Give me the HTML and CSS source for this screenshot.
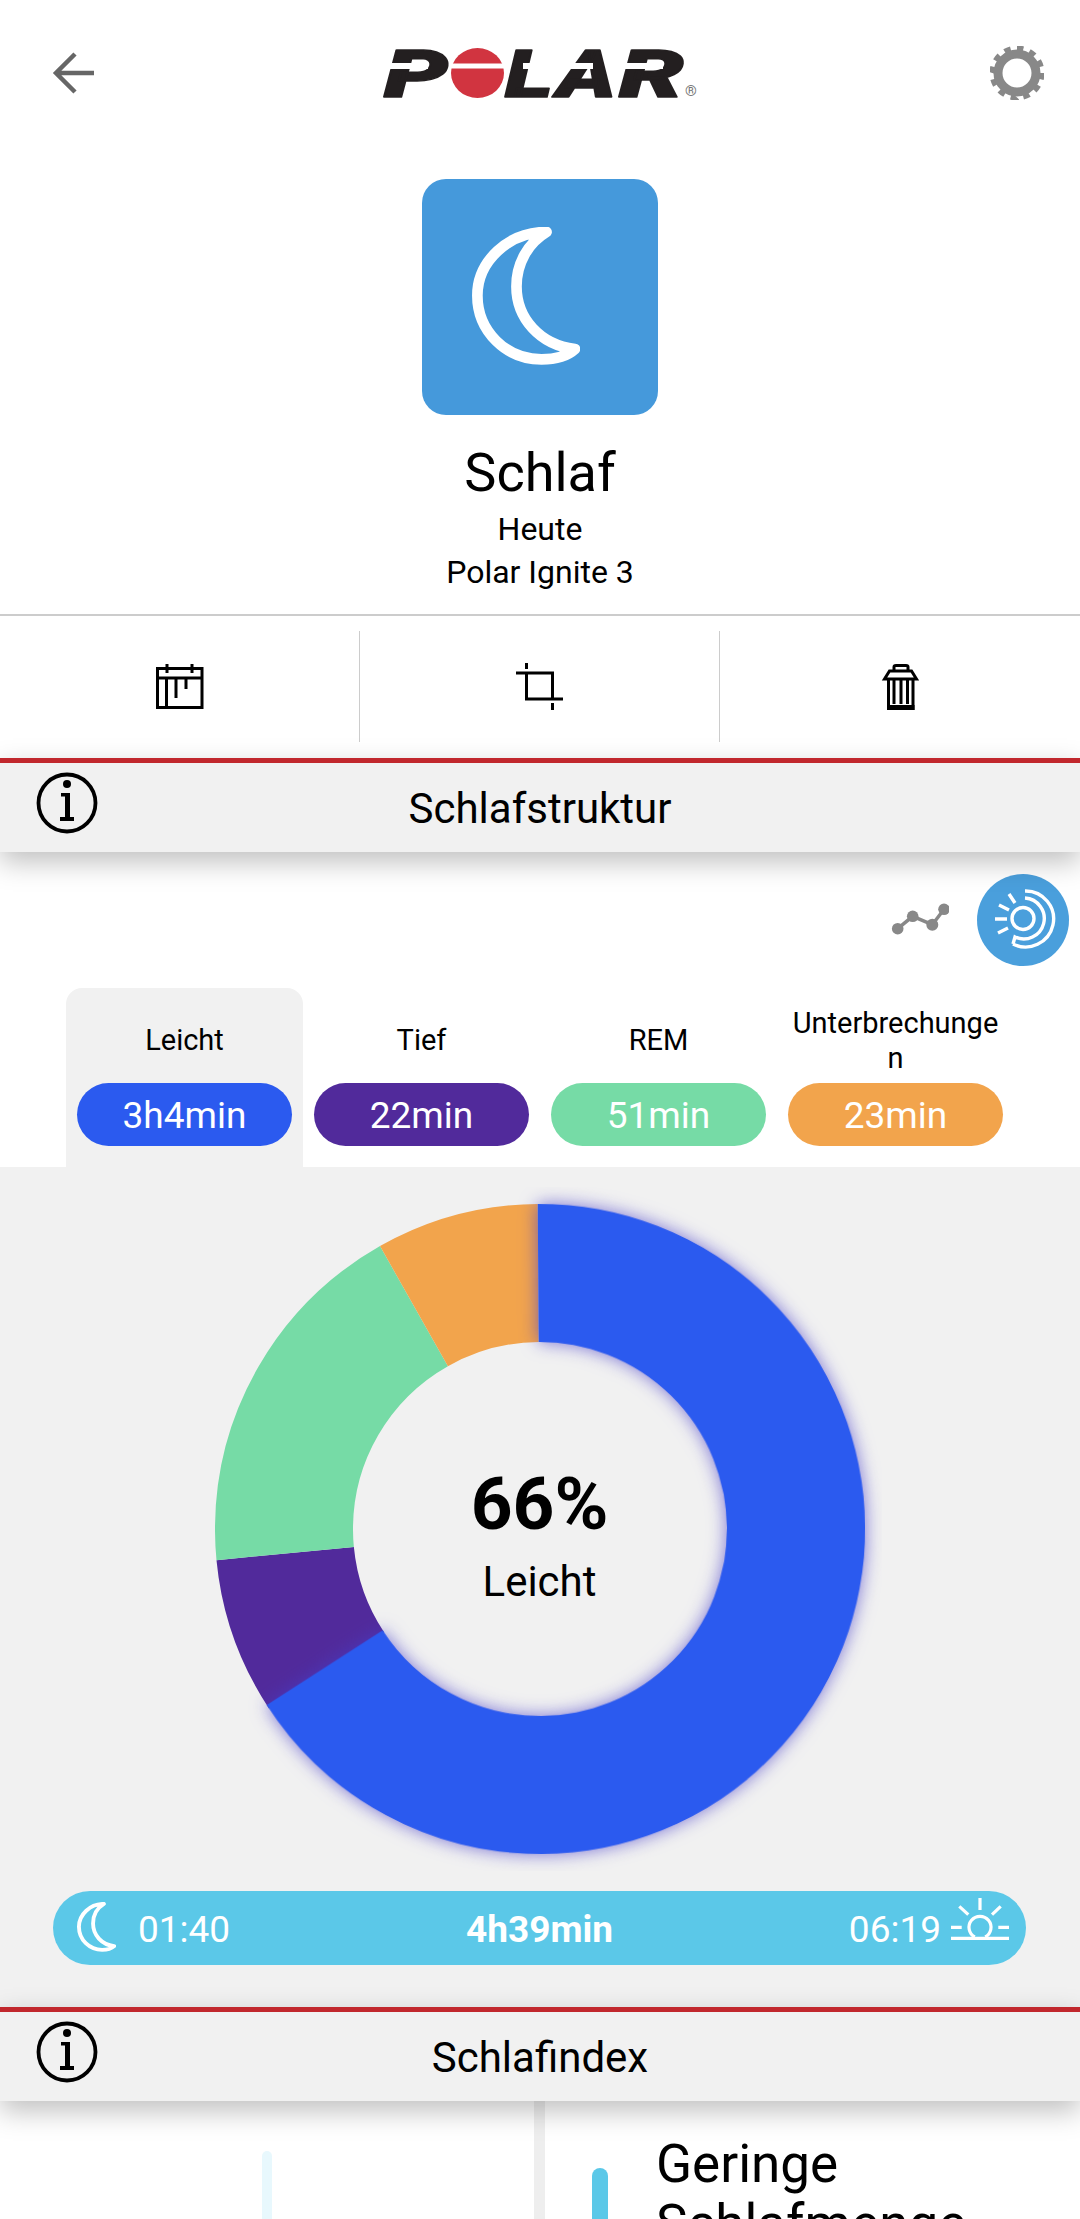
FILE: index.html
```html
<!DOCTYPE html>
<html lang="de">
<head>
    <meta charset="UTF-8">
    <title>Schlaf</title>
    <link rel="stylesheet" href="styles.css">
</head>
<body>
    <svg class="defs" width="0" height="0">
        <symbol id="moon" viewBox="157 157 323 413">
            <path class="moon-line" d="M380 172C265 172 173 260 173 362C173 470 260 553 365 553C405 553 440 545 465 522C360 510 290 430 290 335C290 265 325 205 380 172Z"/>
        </symbol>
        <symbol id="info" viewBox="0 0 62 62">
            <circle class="info-ring" cx="31" cy="31" r="28.5"/>
            <circle cx="31" cy="12" r="4"/>
            <path d="M25 21H34V45H38V49H24V45H29V24.500H25Z"/>
        </symbol>
    </svg>

    <header class="topbar">
        <svg class="back" width="44" height="44" viewBox="52 51 44 44">
            <path d="M94 73H57M75 54L56 73L75 92"/>
        </svg>
        <svg class="logo" width="316" height="58" viewBox="383 44 316 58">
            <text x="383" y="97" textLength="64" lengthAdjust="spacingAndGlyphs">P</text>
            <text x="504" y="97" textLength="48" lengthAdjust="spacingAndGlyphs">L</text>
            <text x="556" y="97" textLength="59" lengthAdjust="spacingAndGlyphs">A</text>
            <text x="618" y="97" textLength="65" lengthAdjust="spacingAndGlyphs">R</text>
            <rect class="logo-cut" x="383" y="63" width="44" height="6"/>
            <rect class="logo-cut" x="522" y="63" width="32" height="6"/>
            <rect class="logo-cut" x="556" y="63" width="36" height="6"/>
            <rect class="logo-cut" x="618" y="63" width="44" height="6"/>
            <ellipse class="logo-o" cx="476.5" cy="73" rx="26.5" ry="25"/>
            <rect class="logo-cut" x="449" y="63.5" width="56" height="5"/>
            <text class="logo-reg" x="684" y="96">®</text>
        </svg>
        <svg class="gear" width="54" height="54" viewBox="-27 -27 54 54">
            <circle class="gear-teeth" r="24.5" pathLength="24"/>
            <circle class="gear-ring" r="19"/>
        </svg>
    </header>

    <section class="title-block">
        <div class="sport-tile">
            <svg class="tile-moon" width="108" height="138"><use href="#moon"/></svg>
        </div>
        <h1>Schlaf</h1>
        <p>Heute</p>
        <p>Polar Ignite 3</p>
    </section>

    <nav class="actions">
        <div class="action">
            <svg class="line-icon" width="52" height="48" viewBox="155 662 52 48">
                <path d="M158.500 667.500H203V706.500H158.500ZM158.500 677H203M168 663V672M193 663V672M167.500 677V706M177 677V697M187 677V688"/>
            </svg>
        </div>
        <div class="action">
            <svg class="line-icon" width="52" height="51" viewBox="515 661 52 51">
                <path d="M527.500 663V669M517 673H553.500V699M527.500 673V699H564M553.500 703V710"/>
            </svg>
        </div>
        <div class="action">
            <svg class="line-icon" width="38" height="50" viewBox="881 661 38 50">
                <path d="M894 669V666Q894 664.500 896 664.500H906Q908 664.500 908 666V669M884.500 678L889.500 670H911.500L916.500 678ZM888.500 678V707.500H913V678M894 679V703M901 679V703M907.500 679V703"/>
                <rect x="887" y="704" width="27.500" height="5"/>
            </svg>
        </div>
    </nav>

    <div class="section-head">
        <svg class="info-icon" width="62" height="62"><use href="#info"/></svg>
        <h2>Schlafstruktur</h2>
    </div>

    <div class="view-toggle">
        <svg class="chart-icon" width="58" height="34" viewBox="891 901 58 34">
            <path class="chart-line" d="M897.700 926.700L912.700 914.300L932.300 922.700L944 907.300"/>
            <circle cx="897.700" cy="926.700" r="5.800"/>
            <circle cx="912.700" cy="914.300" r="5.800"/>
            <circle cx="932.300" cy="922.700" r="6"/>
            <circle cx="944" cy="907.300" r="5.800"/>
        </svg>
        <div class="toggle-on">
            <svg class="toggle-icon" width="92" height="92" viewBox="-46 -46 92 92">
                <circle cx="0" cy="-1.500" r="11"/>
                <path d="M2 -29A28 28 0 1 1 -10 24M2 -22A20.500 20.500 0 1 1 -8 17L-10 24"/>
                <path d="M-28 -1H-16M-25 13L-15 8M-24 -15L-14 -10M-14 -26L-8 -17"/>
            </svg>
        </div>
    </div>

    <div class="stage-tabs">
        <div class="stage-tab active">
            <div class="stage-label">Leicht</div>
            <div class="stage-pill light">3h4min</div>
        </div>
        <div class="stage-tab">
            <div class="stage-label">Tief</div>
            <div class="stage-pill deep">22min</div>
        </div>
        <div class="stage-tab">
            <div class="stage-label">REM</div>
            <div class="stage-pill rem">51min</div>
        </div>
        <div class="stage-tab">
            <div class="stage-label">Unterbrechungen</div>
            <div class="stage-pill wake">23min</div>
        </div>
    </div>

    <section class="structure">
        <div class="donut">
            <svg width="684" height="684" viewBox="-342 -342 684 684">
                <g transform="rotate(-90.4)">
                    <circle class="slice slice-deep" r="256" pathLength="360" stroke-dasharray="28 360" stroke-dashoffset="-236.900"/>
                    <circle class="slice slice-rem" r="256" pathLength="360" stroke-dasharray="66 360" stroke-dashoffset="-264.900"/>
                    <circle class="slice slice-wake" r="256" pathLength="360" stroke-dasharray="29.500 360" stroke-dashoffset="-330.900"/>
                    <circle class="slice slice-light" r="256" pathLength="360" stroke-dasharray="237.600 360"/>
                </g>
            </svg>
            <div class="donut-center">
                <div class="donut-value">66%</div>
                <div class="donut-name">Leicht</div>
            </div>
        </div>

        <div class="sleep-bar">
            <div class="bar-side">
                <svg class="bar-moon" width="39" height="50"><use href="#moon"/></svg>
                <span>01:40</span>
            </div>
            <strong>4h39min</strong>
            <div class="bar-side">
                <span>06:19</span>
                <svg class="sun" width="58" height="43" viewBox="0 0 58 43">
                    <path d="M29 0V12M8.300 8.300L17.300 16.700M49.700 8.300L41 16.700M0 29.300H10.700M47.300 29.300H58M0 40.300H58"/>
                    <path d="M23.800 39A11 11 0 1 1 34.200 39"/>
                </svg>
            </div>
        </div>
    </section>

    <div class="section-head">
        <svg class="info-icon" width="62" height="62"><use href="#info"/></svg>
        <h2>Schlafindex</h2>
    </div>

    <section class="index-row">
        <div class="index-chart">
            <div class="index-track"></div>
        </div>
        <div class="index-note">
            <div class="note-mark"></div>
            <div class="note-text">Geringe Schlafmenge</div>
        </div>
    </section>
</body>
</html>
```

FILE: styles.css
```css
html, body {
    margin: 0;
    padding: 0;
}
body {
    width: 1080px;
    height: 2219px;
    overflow: hidden;
    background: #fff;
    color: #000;
    font-family: Roboto, "Noto Sans", sans-serif;
}
.defs {
    display: block;
    height: 0;
}
.moon-line {
    fill: none;
    stroke: #fff;
    stroke-width: 32;
    stroke-linejoin: round;
}
.info-ring {
    fill: none;
    stroke: #000;
    stroke-width: 3.8;
}

/* top bar */
.topbar {
    display: grid;
    grid-template-columns: 1fr auto 1fr;
    align-items: center;
    height: 146px;
    padding: 0 36px;
}
.back {
    margin-left: 16px;
    fill: none;
    stroke: #666;
    stroke-width: 4.5;
}
.logo {
    overflow: visible;
    margin-left: 3px;
    font-weight: 900;
    font-style: italic;
    font-size: 66px;
    fill: #231f20;
    stroke: #231f20;
    stroke-width: 1.5;
    stroke-linejoin: round;
}
.logo-o {
    fill: #d13440;
    stroke: none;
}
.logo-cut {
    fill: #fff;
    stroke: none;
}
.logo-reg {
    font-size: 15px;
    font-weight: 400;
    font-style: normal;
    fill: #777;
    stroke: none;
}
.gear {
    justify-self: end;
    fill: none;
}
.gear-teeth {
    stroke: #888;
    stroke-width: 6;
    stroke-dasharray: 1 1;
}
.gear-ring {
    stroke: #888;
    stroke-width: 9;
}

/* title */
.title-block {
    display: flex;
    flex-direction: column;
    align-items: center;
    padding-top: 33px;
    padding-bottom: 20px;
    border-bottom: 2px solid #ccc;
}
.sport-tile {
    display: flex;
    width: 236px;
    height: 236px;
    padding: 0;
    border-radius: 24px;
    background: #4599db;
}
.tile-moon {
    margin: 48px 0 0 50px;
}
.title-block h1 {
    margin: 28px 0 5px;
    font-size: 54px;
    line-height: 60px;
    font-weight: 400;
}
.title-block p {
    margin: 0;
    font-size: 32px;
    line-height: 43px;
}

/* action row */
.actions {
    display: grid;
    grid-template-columns: repeat(3, 1fr);
    height: 142px;
    padding: 15px 0 16px;
    box-sizing: border-box;
}
.action {
    display: flex;
    align-items: center;
    justify-content: center;
    border-right: 1px solid #ccc;
}
.action:last-child {
    border-right: none;
}
.line-icon {
    fill: none;
    stroke: #000;
    stroke-width: 3;
}
.line-icon rect {
    fill: #000;
    stroke: none;
}

/* section heading */
.section-head {
    position: relative;
    z-index: 2;
    display: flex;
    align-items: center;
    justify-content: center;
    height: 89px;
    border-top: 5px solid #c1272d;
    background: #f1f1f1;
    box-shadow: 0 10px 26px rgba(0, 0, 0, 0.25);
}
.section-head h2 {
    margin: 0;
    padding-top: 2px;
    font-size: 42px;
    font-weight: 400;
}
.info-icon {
    position: absolute;
    left: 36px;
    top: 9px;
}

/* line / ring toggle */
.view-toggle {
    display: flex;
    align-items: center;
    justify-content: flex-end;
    gap: 28px;
    padding: 22px 11px 22px 0;
}
.chart-icon {
    fill: #888;
}
.chart-line {
    fill: none;
    stroke: #888;
    stroke-width: 3.5;
}
.toggle-on {
    width: 92px;
    height: 92px;
    border-radius: 50%;
    background: #4a9fdc;
}
.toggle-icon {
    display: block;
    fill: none;
    stroke: #fff;
    stroke-width: 3.4;
}

/* stage tabs */
.stage-tabs {
    display: grid;
    grid-template-columns: repeat(4, 237px);
    padding-left: 66px;
}
.stage-tab {
    height: 179px;
    padding: 10px 11px 21px;
    box-sizing: border-box;
    display: flex;
    flex-direction: column;
    border-radius: 16px 16px 0 0;
}
.stage-tab.active {
    background: #f1f1f1;
}
.stage-label {
    flex: 1;
    display: flex;
    align-items: center;
    justify-content: center;
    text-align: center;
    font-size: 29px;
    line-height: 35px;
    overflow-wrap: anywhere;
}
.stage-pill {
    height: 63px;
    line-height: 65px;
    border-radius: 32px;
    text-align: center;
    color: #fff;
    font-size: 37px;
}
.light { background: #2b5aef; }
.deep { background: #512a9b; }
.rem { background: #76dba6; }
.wake { background: #f2a44c; }

/* donut + bar */
.structure {
    background: #f1f1f1;
    padding: 20px 54px 42px 53px;
}
.donut {
    position: relative;
    width: 684px;
    height: 684px;
    margin: 0 auto;
}
.donut svg {
    display: block;
}
.slice {
    fill: none;
    stroke-width: 138;
}
.slice-light {
    stroke: #2b5aef;
    filter: drop-shadow(0 0 9px rgba(70, 60, 200, 0.7));
}
.slice-deep { stroke: #512a9b; }
.slice-rem { stroke: #76dba6; }
.slice-wake { stroke: #f2a44c; }
.donut-center {
    position: absolute;
    inset: 0;
    padding-top: 21px;
    box-sizing: border-box;
    display: flex;
    flex-direction: column;
    align-items: center;
    justify-content: center;
}
.donut-value {
    font-size: 73px;
    line-height: 84px;
    font-weight: 700;
}
.donut-name {
    font-size: 42px;
    line-height: 72px;
}
.sleep-bar {
    display: flex;
    align-items: center;
    justify-content: space-between;
    height: 74px;
    box-sizing: border-box;
    margin-top: 20px;
    padding: 2px 17px 0 24px;
    border-radius: 37px;
    background: #5bc8e8;
    color: #fff;
    font-size: 37px;
}
.sleep-bar strong {
    font-weight: 700;
}
.bar-side {
    display: flex;
    align-items: center;
    gap: 22px;
}
.bar-side:last-child {
    gap: 10px;
}
.bar-moon {
    margin-bottom: 4px;
}
.sun {
    fill: none;
    stroke: #fff;
    stroke-width: 3.2;
    margin-bottom: 19px;
}

/* sleep score */
.index-row {
    display: grid;
    grid-template-columns: 545px 1fr;
    height: 118px;
    overflow: hidden;
}
.index-chart {
    border-right: 11px solid #eee;
    padding: 50px 0 0 262px;
}
.index-track {
    width: 10px;
    height: 100px;
    border-radius: 5px;
    background: #e8f8fd;
}
.index-note {
    display: flex;
    align-items: flex-start;
    gap: 48px;
    padding-left: 47px;
}
.note-mark {
    flex: none;
    width: 16px;
    height: 60px;
    margin-top: 67px;
    border-radius: 8px;
    background: #5bc8e8;
}
.note-text {
    margin-top: 33px;
    font-size: 53px;
    line-height: 60px;
}
```
